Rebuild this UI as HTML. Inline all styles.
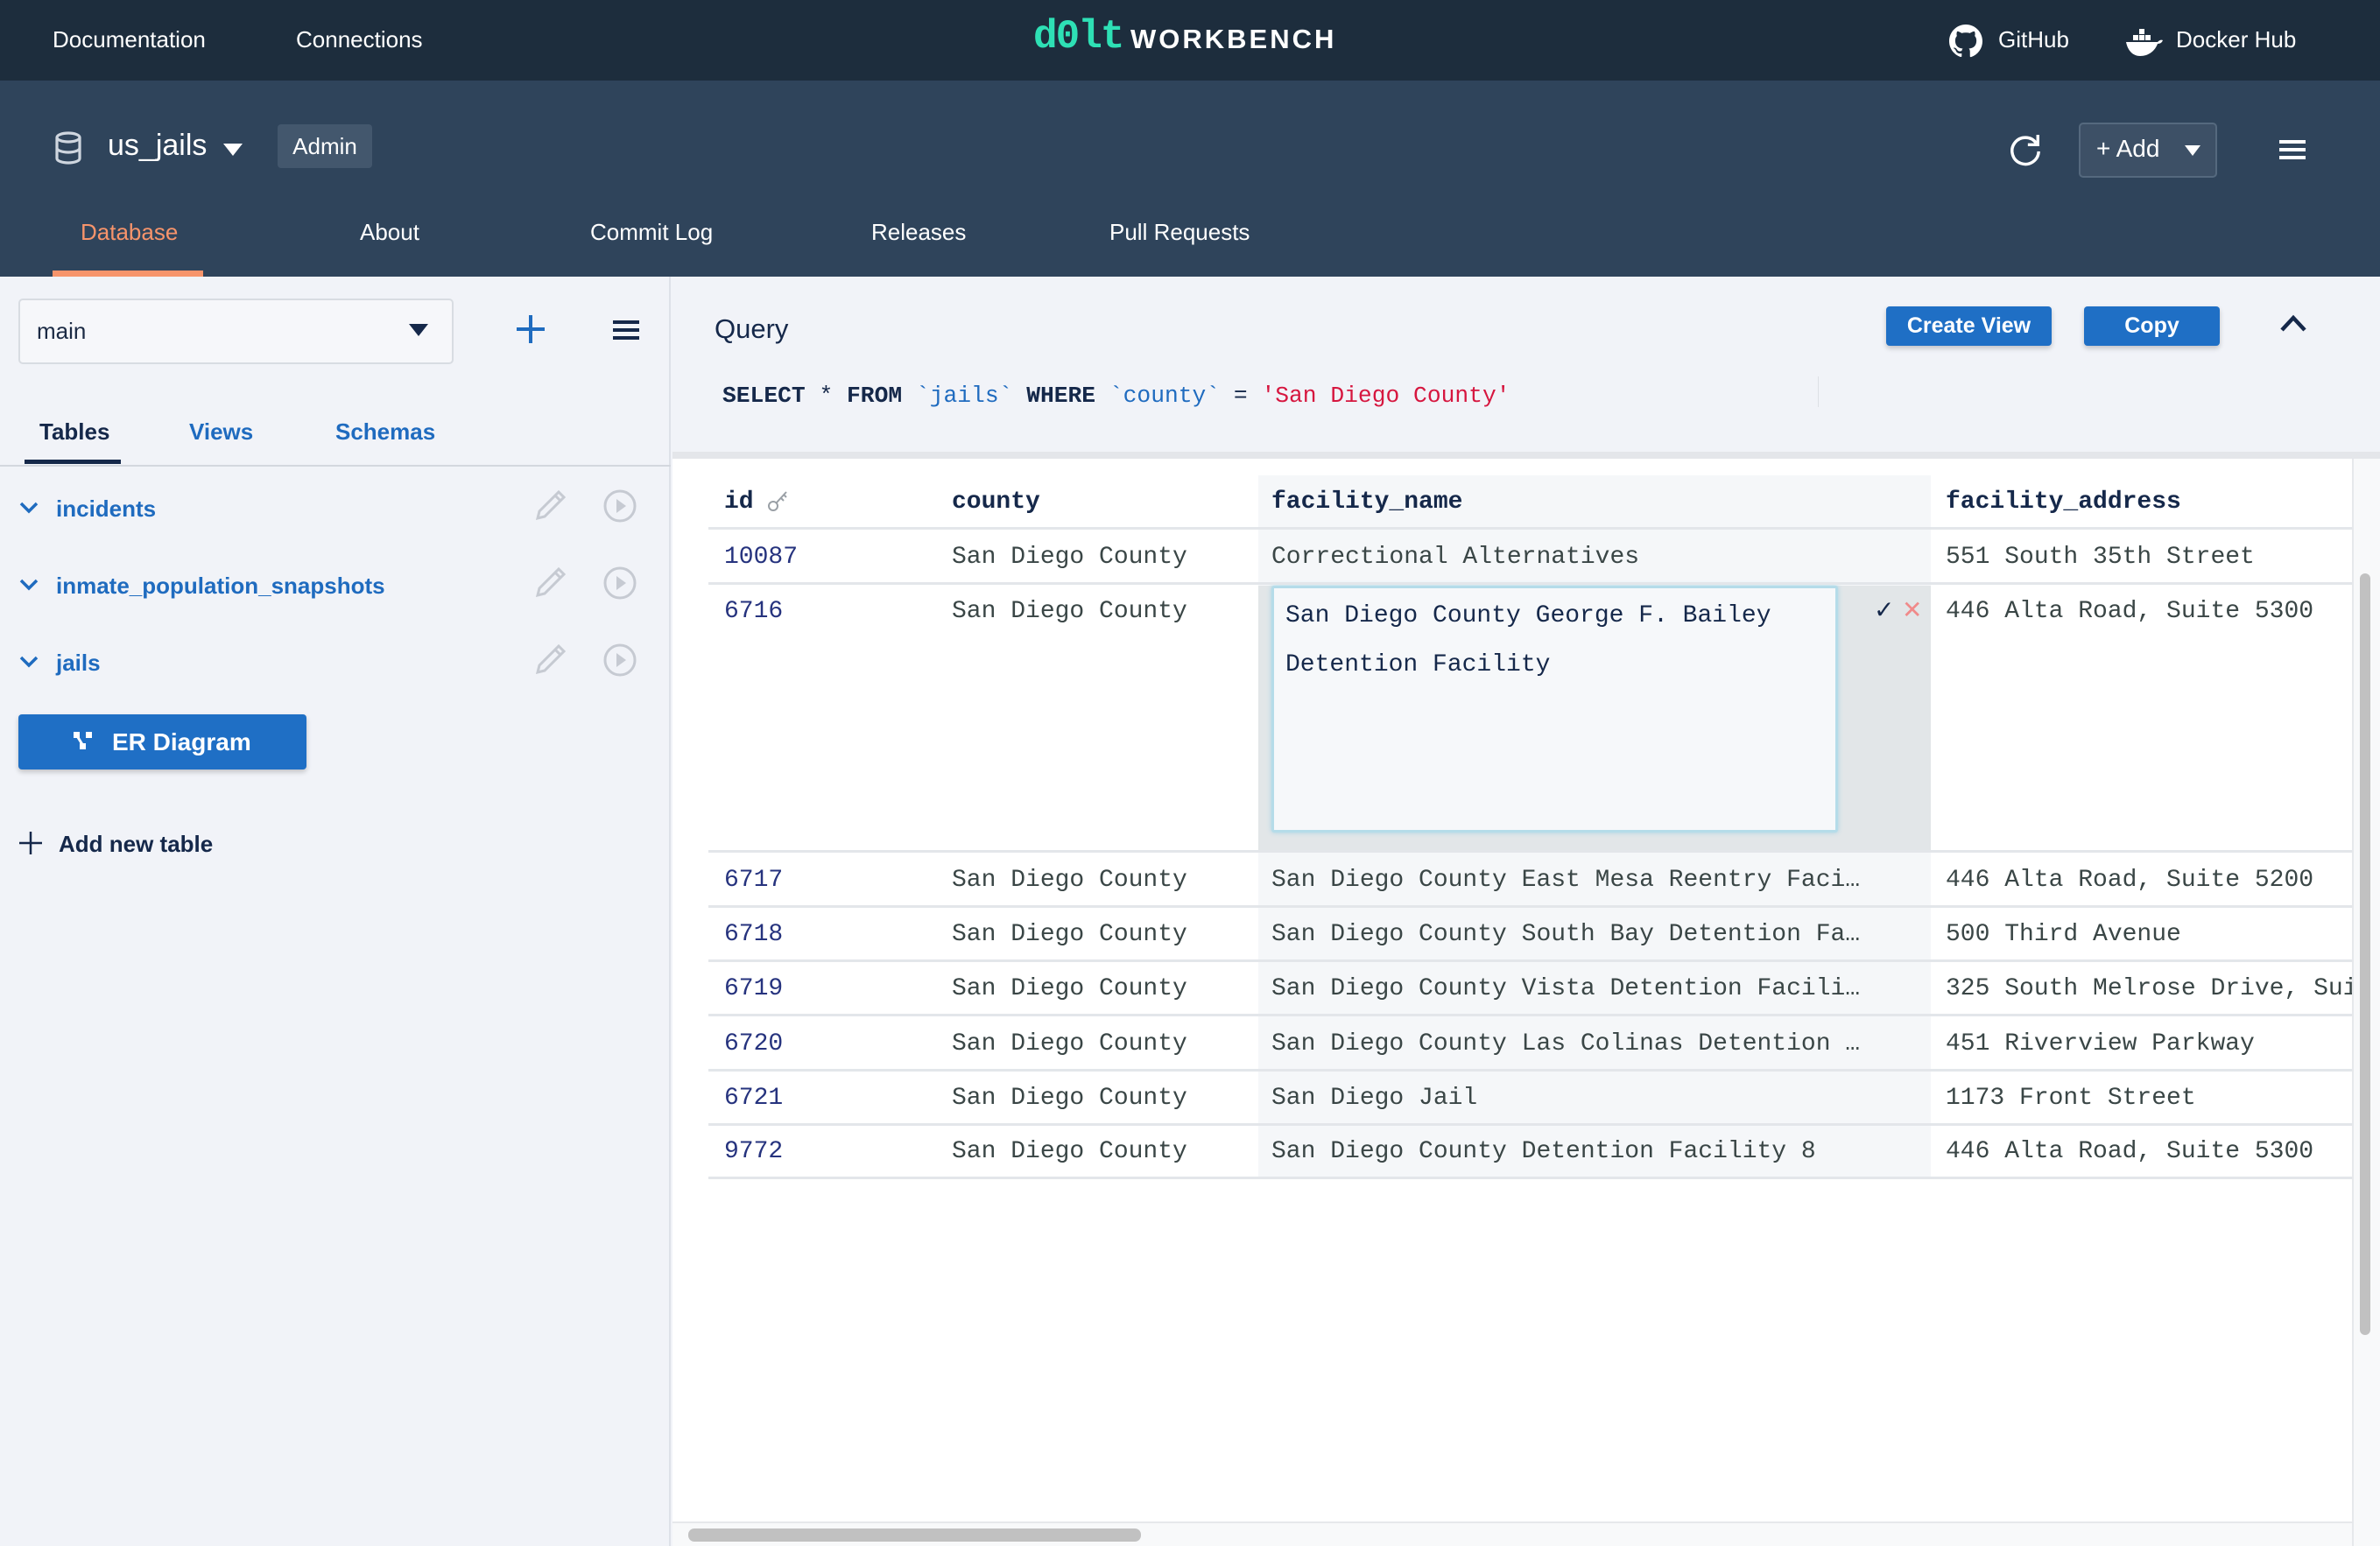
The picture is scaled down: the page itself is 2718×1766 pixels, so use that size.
<!DOCTYPE html>
<html><head><meta charset="utf-8"><style>
*{box-sizing:border-box;margin:0;padding:0}
body{width:2718px;height:1766px;overflow:hidden;background:#f1f3f8;font-family:"Liberation Sans",sans-serif;position:relative}
.a{position:absolute;white-space:nowrap}
.mono{font-family:"Liberation Mono",monospace}
.top{left:0;top:0;width:2718px;height:92px;background:#1d2d3d}
.hdr{left:0;top:92px;width:2718px;height:224px;background:#2f445b}
.nav{color:#fff;font-size:26px}
.tab{color:#fff;font-size:26px;top:250px}
.side{left:0;top:316px;width:766px;height:1450px;background:#f1f3f8;border-right:2px solid #dde1e8}
.tbl{color:#1f6bbf;font-size:26px;font-weight:bold}
.btn{background:#1f6fc5;color:#fff;font-weight:bold;border-radius:4px;box-shadow:0 3px 6px rgba(0,0,0,.2);text-align:center}
.cell{font-size:28px;color:#3a4646}
.id{font-size:28px;color:#26337e}
.hl{left:809px;width:1877px;height:3px;background:#e3e6ea}
.r{margin-top:4px}
</style></head><body>
<div class="a top"></div>
<div class="a nav" style="left:60px;top:30px">Documentation</div>
<div class="a nav" style="left:338px;top:30px">Connections</div>
<div class="a mono" style="left:1180px;top:16px;font-size:46px;font-weight:bold;color:#2ee0b5;letter-spacing:-2px">d0lt</div>
<div class="a" style="left:1291px;top:27px;font-size:31px;font-weight:bold;color:#fff;letter-spacing:3px">WORKBENCH</div>
<svg class="a" style="left:2226px;top:28px" width="38" height="38" viewBox="0 0 16 16"><path fill="#fff" d="M8 0C3.58 0 0 3.58 0 8c0 3.540 2.29 6.53 5.47 7.59.4.07.55-.17.55-.38v-1.33c-2.23.48-2.7-1.07-2.7-1.070-.36-.92-.89-1.17-.89-1.17-.73-.5.06-.49.06-.49.8.06 1.23.83 1.23.83.71 1.22 1.87.87 2.33.66.07-.52.28-.87.5-1.07-1.78-.2-3.64-.89-3.64-3.950 0-.87.31-1.59.82-2.15-.08-.2-.36-1.02.08-2.12 0 0 .67-.21 2.2.82a7.6 7.6 0 014 0c1.53-1.04 2.2-.82 2.2-.82.44 1.1.16 1.92.08 2.12.51.56.82 1.27.82 2.15 0 3.07-1.87 3.75-3.65 3.95.29.25.54.73.54 1.48v2.2c0 .21.15.46.55.38A8 8 0 0016 8c0-4.42-3.58-8-8-8z"/></svg>
<div class="a nav" style="left:2282px;top:30px">GitHub</div>
<svg class="a" style="left:2426px;top:28px" width="44" height="36" viewBox="0 0 22 18"><g fill="#fff"><rect x="5" y="6" width="3" height="3"/><rect x="8.5" y="6" width="3" height="3"/><rect x="12" y="6" width="3" height="3"/><rect x="8.5" y="2.5" width="3" height="3"/><path d="M1 10h18c1-1 2-1.5 3-1-.5 1-1 2-3 2-1.5 4-5 7-10 7-4 0-7-3-8-8z"/></g></svg>
<div class="a nav" style="left:2485px;top:30px">Docker Hub</div>

<div class="a hdr"></div>
<svg class="a" style="left:62px;top:150px" width="32" height="38" viewBox="0 0 16 19"><g fill="none" stroke="#cfd6df" stroke-width="1.6"><ellipse cx="8" cy="3.5" rx="6.5" ry="2.5"/><path d="M1.5 3.5v12c0 1.4 2.9 2.5 6.5 2.5s6.5-1.1 6.5-2.5v-12M1.5 9.5c0 1.4 2.9 2.5 6.5 2.5s6.5-1.1 6.5-2.5"/></g></svg>
<div class="a" style="left:123px;top:147px;font-size:34px;color:#fff">us_jails</div>
<svg class="a" style="left:255px;top:164px" width="22" height="14"><path d="M0 0h22L11 14z" fill="#fff"/></svg>
<div class="a" style="left:317px;top:142px;width:108px;height:50px;background:#43576d;border-radius:4px;color:#fff;font-size:26px;text-align:center;line-height:50px">Admin</div>
<svg class="a" style="left:2294px;top:152px" width="38" height="40" viewBox="0 0 20 21"><path d="M16.5 6A8 8 0 1 0 18 11" fill="none" stroke="#fff" stroke-width="1.8"/><path d="M17.5 1v6h-6" fill="none" stroke="#fff" stroke-width="1.8"/></svg>
<div class="a" style="left:2374px;top:140px;width:158px;height:63px;border:2px solid #55697e;background:#3d5066;border-radius:5px"></div>
<div class="a" style="left:2394px;top:154px;color:#fff;font-size:28px">+ Add</div>
<svg class="a" style="left:2495px;top:166px" width="18" height="12"><path d="M0 0h18L9 12z" fill="#fff"/></svg>
<div class="a" style="left:2603px;top:160px;width:30px;height:4px;background:#fff;box-shadow:0 9px 0 #fff,0 18px 0 #fff"></div>
<div class="a tab" style="left:92px;color:#f7946b">Database</div>
<div class="a" style="left:60px;top:309px;width:172px;height:7px;background:#f7946b"></div>
<div class="a tab" style="left:411px">About</div>
<div class="a tab" style="left:674px">Commit Log</div>
<div class="a tab" style="left:995px">Releases</div>
<div class="a tab" style="left:1267px">Pull Requests</div>

<div class="a side"></div>
<div class="a" style="left:21px;top:341px;width:497px;height:75px;border:2px solid #d8dce2;border-radius:5px;background:#f6f7fa"></div>
<div class="a" style="left:42px;top:363px;font-size:26px;color:#1b2a44">main</div>
<svg class="a" style="left:467px;top:370px" width="22" height="14"><path d="M0 0h22L11 14z" fill="#15284a"/></svg>
<svg class="a" style="left:588px;top:358px" width="36" height="36"><path d="M18 2v32M2 18h32" stroke="#1f6bbf" stroke-width="4"/></svg>
<div class="a" style="left:700px;top:366px;width:30px;height:4px;background:#15284a;box-shadow:0 9px 0 #15284a,0 18px 0 #15284a"></div>
<div class="a" style="left:45px;top:478px;font-size:26px;font-weight:bold;color:#15284a">Tables</div>
<div class="a" style="left:28px;top:525px;width:110px;height:5px;background:#15284a"></div>
<div class="a tbl" style="left:216px;top:478px">Views</div>
<div class="a tbl" style="left:383px;top:478px">Schemas</div>
<div class="a" style="left:0;top:531px;width:766px;height:2px;background:#d3d7de"></div>

<svg class="a" style="left:22px;top:572px" width="22" height="16"><path d="M2 3l9 9 9-9" fill="none" stroke="#1f6bbf" stroke-width="3.5"/></svg>
<div class="a tbl" style="left:64px;top:566px">incidents</div>
<svg class="a" style="left:22px;top:660px" width="22" height="16"><path d="M2 3l9 9 9-9" fill="none" stroke="#1f6bbf" stroke-width="3.5"/></svg>
<div class="a tbl" style="left:64px;top:654px">inmate_population_snapshots</div>
<svg class="a" style="left:22px;top:748px" width="22" height="16"><path d="M2 3l9 9 9-9" fill="none" stroke="#1f6bbf" stroke-width="3.5"/></svg>
<div class="a tbl" style="left:64px;top:742px">jails</div>
<svg class="a" style="left:608px;top:560px" width="40" height="220" viewBox="0 0 40 220"><g fill="none" stroke="#c6cad2" stroke-width="3"><path d="M6 32l2-8L30 2l6 6-22 22zM26 6l6 6"/><path transform="translate(0,88)" d="M6 32l2-8L30 2l6 6-22 22zM26 6l6 6"/><path transform="translate(0,176)" d="M6 32l2-8L30 2l6 6-22 22zM26 6l6 6"/></g></svg>
<svg class="a" style="left:688px;top:558px" width="40" height="220"><g fill="none" stroke="#c6cad2" stroke-width="3"><circle cx="20" cy="20" r="17"/><circle cx="20" cy="108" r="17"/><circle cx="20" cy="196" r="17"/></g><g fill="#c6cad2"><path d="M16 12v16l11-8z"/><path d="M16 100v16l11-8z"/><path d="M16 188v16l11-8z"/></g></svg>
<div class="a btn" style="left:21px;top:816px;width:329px;height:63px"></div>
<svg class="a" style="left:84px;top:836px" width="22" height="24"><g fill="#fff"><rect x="0" y="0" width="7" height="7"/><rect x="14" y="0" width="7" height="7"/><rect x="7" y="13" width="7" height="7"/><path d="M3 3l8 13" stroke="#fff" stroke-width="3"/></g></svg>
<div class="a" style="left:128px;top:832px;font-size:28px;font-weight:bold;color:#fff">ER Diagram</div>
<svg class="a" style="left:22px;top:950px" width="26" height="26"><path d="M13 0v26M0 13h26" stroke="#15284a" stroke-width="2.5"/></svg>
<div class="a" style="left:67px;top:949px;font-size:26px;font-weight:bold;color:#15284a">Add new table</div>

<div class="a" style="left:816px;top:358px;font-size:31px;color:#15284a">Query</div>
<div class="a btn" style="left:2154px;top:350px;width:189px;height:45px;font-size:25px;line-height:45px">Create View</div>
<div class="a btn" style="left:2380px;top:350px;width:155px;height:45px;font-size:25px;line-height:45px">Copy</div>
<svg class="a" style="left:2603px;top:358px" width="32" height="22"><path d="M3 19L16 5l13 14" fill="none" stroke="#15284a" stroke-width="4.5"/></svg>
<div class="a mono" style="left:825px;top:437px;font-size:26.3px;color:#15284a"><b>SELECT</b> * <b>FROM</b> <span style="color:#1f6bbf">`jails`</span> <b>WHERE</b> <span style="color:#1f6bbf">`county`</span> = <span style="color:#d6163f">'San Diego County'</span></div>
<div class="a" style="left:2076px;top:430px;width:1px;height:35px;background:#dde0e5"></div>
<div class="a" style="left:768px;top:516px;width:1950px;height:8px;background:#e4e6ea"></div>
<div class="a" style="left:768px;top:524px;width:1918px;height:1214px;background:#fff"></div>
<div class="a" style="left:2686px;top:524px;width:32px;height:1242px;background:#f8f9fa;border-left:2px solid #e6e8eb"></div>
<div class="a" style="left:2695px;top:655px;width:12px;height:870px;background:#c1c1c1;border-radius:6px"></div>
<div class="a" style="left:768px;top:1738px;width:1918px;height:28px;background:#f8f9fa;border-top:2px solid #e6e8eb"></div>
<div class="a" style="left:786px;top:1746px;width:517px;height:15px;background:#c1c1c1;border-radius:7px"></div>

<div class="a" style="left:1437px;top:543px;width:768px;height:802px;background:#f5f7f9"></div>
<div class="a" style="left:1437px;top:669px;width:768px;height:303px;background:#e2e6e8"></div>
<div class="a" style="left:1452px;top:669px;width:647px;height:282px;background:#f6f8fa;border:3px solid #b5dce9;box-shadow:0 0 6px #a6d3e4;border-radius:3px"></div>
<div class="a mono" style="left:1468px;top:676px;font-size:28px;line-height:56px;color:#15284a;white-space:normal;width:620px">San Diego County George F. Bailey Detention Facility</div>
<div class="a" style="left:2140px;top:680px;font-size:28px;color:#15284a">✓</div>
<div class="a" style="left:2172px;top:680px;font-size:28px;color:#f08a8a">✕</div>

<div class="a hl" style="top:602px"></div>
<div class="a hl" style="top:665px"></div>
<div class="a hl" style="top:971px"></div>
<div class="a hl" style="top:1034px"></div>
<div class="a hl" style="top:1096px"></div>
<div class="a hl" style="top:1158px"></div>
<div class="a hl" style="top:1221px"></div>
<div class="a hl" style="top:1283px"></div>
<div class="a hl" style="top:1344px"></div>

<div class="a mono" style="left:827px;top:558px;font-size:28px;font-weight:bold;color:#15284a">id</div>
<svg class="a" style="left:876px;top:558px" width="26" height="28"><g fill="none" stroke="#9aa0a6" stroke-width="2"><circle cx="7" cy="20" r="5"/><path d="M11 16L22 4M16 11l3 3M19 7l3 3"/></g></svg>
<div class="a mono" style="left:1087px;top:558px;font-size:28px;font-weight:bold;color:#15284a">county</div>
<div class="a mono" style="left:1452px;top:558px;font-size:28px;font-weight:bold;color:#15284a">facility_name</div>
<div class="a mono" style="left:2222px;top:558px;font-size:28px;font-weight:bold;color:#15284a">facility_address</div>

<div class="a id mono" style="left:827px;top:621px">10087</div><div class="a cell mono" style="left:1087px;top:621px">San Diego County</div><div class="a cell mono" style="left:1452px;top:621px">Correctional Alternatives</div><div class="a cell mono" style="left:2222px;top:621px">551 South 35th Street</div>
<div class="a id mono" style="left:827px;top:683px">6716</div><div class="a cell mono" style="left:1087px;top:683px">San Diego County</div><div class="a cell mono" style="left:2222px;top:683px">446 Alta Road, Suite 5300</div>
<div class="a id mono" style="left:827px;top:990px">6717</div><div class="a cell mono" style="left:1087px;top:990px">San Diego County</div><div class="a cell mono" style="left:1452px;top:990px">San Diego County East Mesa Reentry Faci…</div><div class="a cell mono" style="left:2222px;top:990px">446 Alta Road, Suite 5200</div>
<div class="a id mono" style="left:827px;top:1052px">6718</div><div class="a cell mono" style="left:1087px;top:1052px">San Diego County</div><div class="a cell mono" style="left:1452px;top:1052px">San Diego County South Bay Detention Fa…</div><div class="a cell mono" style="left:2222px;top:1052px">500 Third Avenue</div>
<div class="a id mono" style="left:827px;top:1114px">6719</div><div class="a cell mono" style="left:1087px;top:1114px">San Diego County</div><div class="a cell mono" style="left:1452px;top:1114px">San Diego County Vista Detention Facili…</div><div class="a cell mono" style="left:2222px;top:1114px;width:464px;overflow:hidden">325 South Melrose Drive, Suite</div>
<div class="a id mono" style="left:827px;top:1177px">6720</div><div class="a cell mono" style="left:1087px;top:1177px">San Diego County</div><div class="a cell mono" style="left:1452px;top:1177px">San Diego County Las Colinas Detention …</div><div class="a cell mono" style="left:2222px;top:1177px">451 Riverview Parkway</div>
<div class="a id mono" style="left:827px;top:1239px">6721</div><div class="a cell mono" style="left:1087px;top:1239px">San Diego County</div><div class="a cell mono" style="left:1452px;top:1239px">San Diego Jail</div><div class="a cell mono" style="left:2222px;top:1239px">1173 Front Street</div>
<div class="a id mono" style="left:827px;top:1300px">9772</div><div class="a cell mono" style="left:1087px;top:1300px">San Diego County</div><div class="a cell mono" style="left:1452px;top:1300px">San Diego County Detention Facility 8</div><div class="a cell mono" style="left:2222px;top:1300px">446 Alta Road, Suite 5300</div>
</body></html>
